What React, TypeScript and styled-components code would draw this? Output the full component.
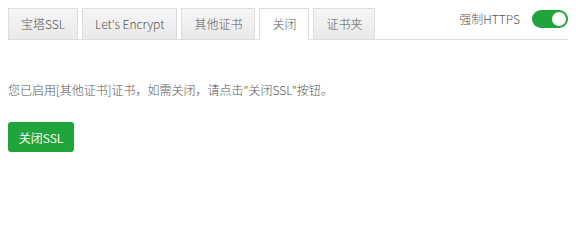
import styled, { createGlobalStyle } from "styled-components";

const GlobalStyle = createGlobalStyle`
  body {
    margin: 0;
    background: #fff;
    font-family: "Microsoft YaHei", "Noto Sans CJK SC", "Noto Sans", sans-serif;
    font-size: 12px;
    color: #555;
  }
`;

const tabs = ["宝塔SSL", "Let's Encrypt", "其他证书", "关闭", "证书夹"];

const App = () => {
  return (
    <>
      <GlobalStyle />
      <Page>
        <TabBar>
          <TabList>
            {tabs.map((t) => (
              <Tab key={t} $active={t === "关闭"}>
                {t}
              </Tab>
            ))}
          </TabList>
          <ForceHttps>
            <span>强制HTTPS</span>
            <Switch>
              <Knob />
            </Switch>
          </ForceHttps>
        </TabBar>
        <Message>您已启用[其他证书]证书，如需关闭，请点击"关闭SSL"按钮。</Message>
        <CloseButton>关闭SSL</CloseButton>
      </Page>
    </>
  );
};

export default App;

const Page = styled.div`
  width: 560px;
  padding: 8px 12px 0 8px;
`;

const TabBar = styled.div`
  display: flex;
  justify-content: space-between;
  align-items: stretch;
  border-bottom: 1px solid #ddd;
`;

const TabList = styled.div`
  display: flex;
  gap: 4px;
`;

const Tab = styled.div<{ $active?: boolean }>`
  line-height: 30px;
  padding: 0 12px;
  border: 1px solid #ddd;
  border-bottom: none;
  margin-bottom: ${(p) => (p.$active ? "-1px" : "0")};
  height: ${(p) => (p.$active ? "31px" : "30px")};
  background: ${(p) =>
    p.$active ? "#fff" : "linear-gradient(#f6f6f6, #e9e9e9)"};
  color: #555;
  font-size: 12px;
  font-weight: 300;
  cursor: pointer;
`;

const ForceHttps = styled.div`
  display: flex;
  align-items: center;
  gap: 12px;
  padding-bottom: 10px;
  color: #555;
  font-weight: 300;
`;

const Switch = styled.div`
  width: 36px;
  height: 18px;
  border-radius: 9px;
  background: #20a53a;
  display: flex;
  align-items: center;
  justify-content: flex-end;
  padding: 0 2px;
  box-sizing: border-box;
`;

const Knob = styled.div`
  width: 14px;
  height: 14px;
  border-radius: 50%;
  background: #fff;
`;

const Message = styled.p`
  margin: 41px 0 0;
  line-height: 18px;
  color: #555;
  font-weight: 300;
`;

const CloseButton = styled.button`
  margin-top: 23px;
  width: 66px;
  height: 30px;
  border: none;
  border-radius: 3px;
  background: #20a53a;
  color: #fff;
  font-family: inherit;
  font-size: 12px;
  cursor: pointer;
`;
